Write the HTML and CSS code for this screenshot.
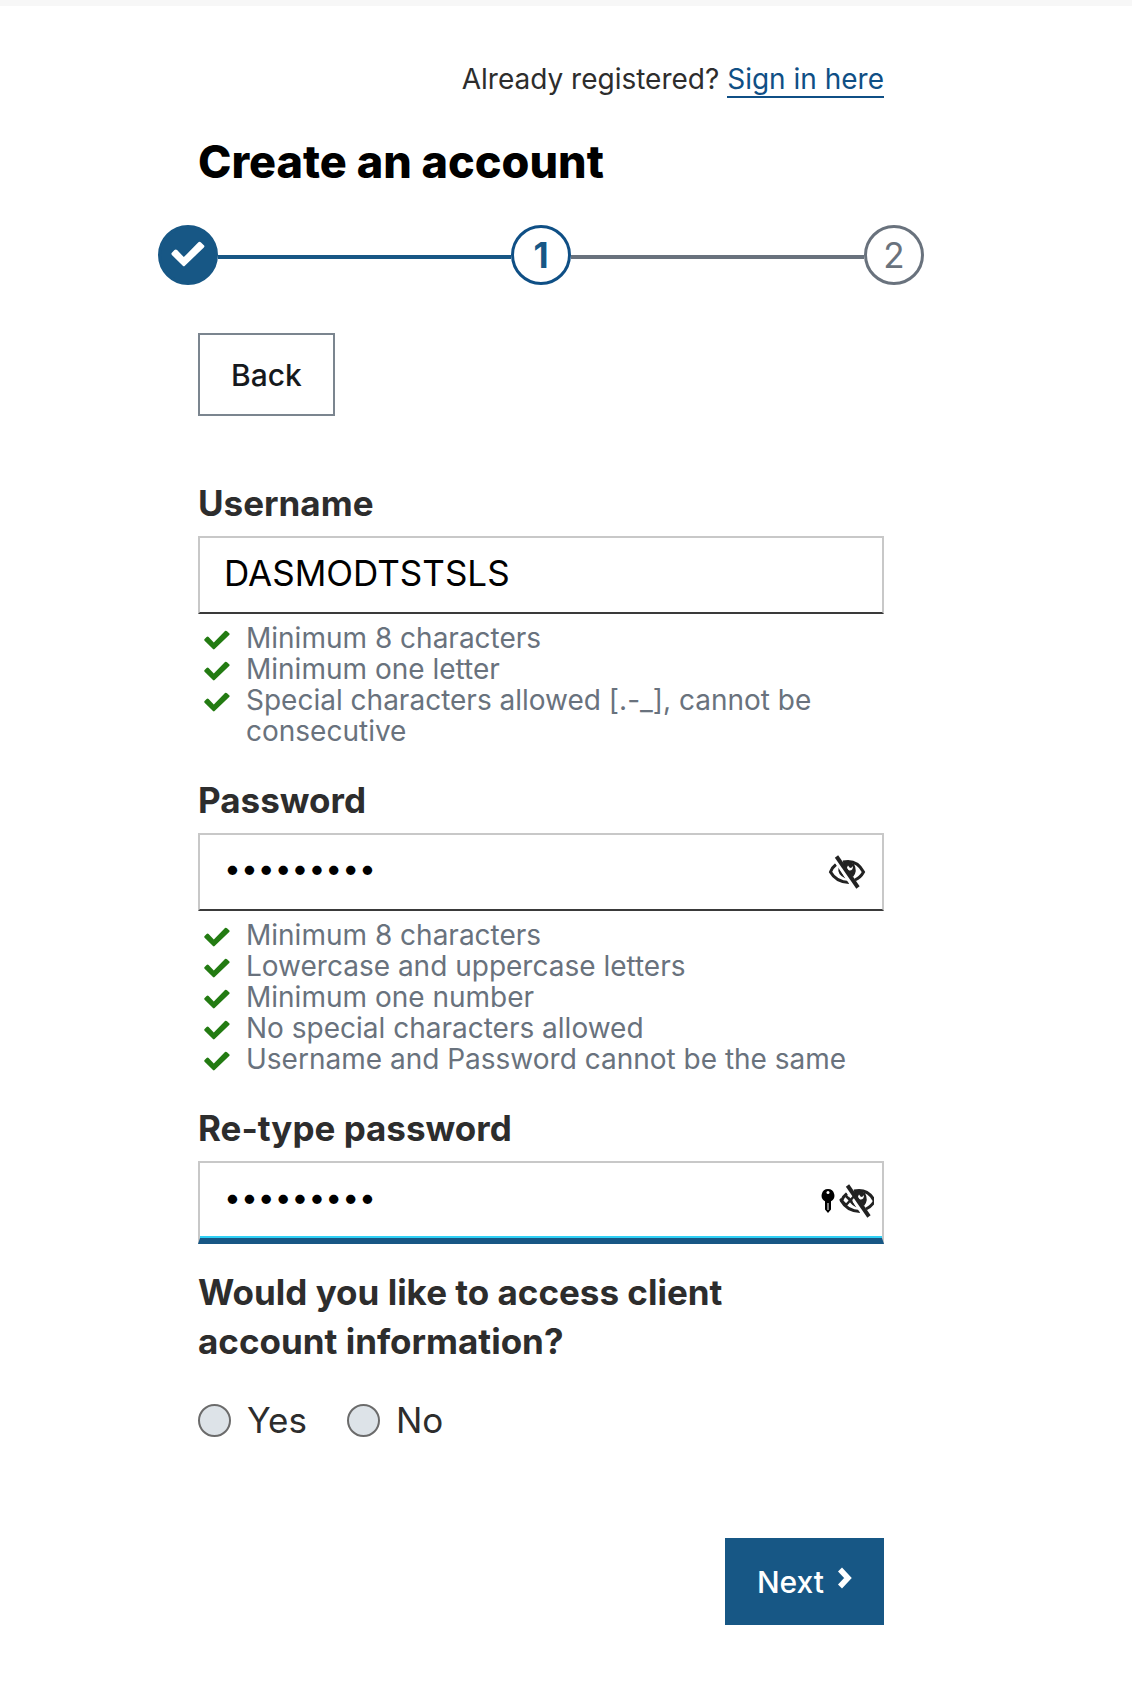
FILE: index.html
```html
<!DOCTYPE html>
<html lang="en">
<head>
    <meta charset="UTF-8">
    <meta name="viewport" content="width=device-width, initial-scale=1.0">
    <title>Create an account</title>
    <link rel="stylesheet" href="styles.css">
</head>
<body>
    <svg class="sprite" aria-hidden="true">
        <symbol id="check" viewBox="0 0 26 20">
            <path d="M0.6 9 L2.6 7 Q3.6 6.2 4.6 7 L9.8 12.4 L21 1 Q22 0.2 23 1.2 L25.4 3.4 Q26 4.2 25.2 5 L10.6 19 Q9.8 19.8 9 19 L0.6 10.8 Q-0.2 9.8 0.6 9 Z" fill="currentColor"/>
        </symbol>
        <symbol id="eye-off" viewBox="0 0 38 34">
            <path d="M8 9.5 Q4 12.5 2.5 17 Q8 27 21 27.5 M15 7 Q29 4 35.5 17 Q32.5 22.5 27 25" fill="none" stroke="currentColor" stroke-width="3"/>
            <path d="M14 9 Q20 5 26 9 Q30 16 25 22 Z M10.5 12 Q9 20 17.5 23.5 Z" fill="currentColor"/>
            <path d="M20 10.5 Q17.5 14 21 15.5 Q25 16 25 11 Q24 13 22 13 Z" fill="#fff"/>
            <path d="M5.5 3 L26.5 34" stroke="#fff" stroke-width="3"/>
            <path d="M8.5 1.5 L30 32.5" stroke="currentColor" stroke-width="4"/>
        </symbol>
    </svg>

    <main class="page">
        <p class="signin">Already registered? <a href="#">Sign in here</a></p>
        <h1>Create an account</h1>

        <ol class="steps">
            <li class="step done" aria-label="Completed"><svg class="step-check"><use href="#check"/></svg></li>
            <li class="bar done" role="presentation"></li>
            <li class="step current" aria-current="step">1</li>
            <li class="bar" role="presentation"></li>
            <li class="step">2</li>
        </ol>

        <form>
            <button type="button" class="btn btn-back">Back</button>

            <div class="field">
                <label for="username">Username</label>
                <div class="control">
                    <input type="text" id="username" value="DASMODTSTSLS">
                </div>
                <ul class="rules">
                    <li><svg><use href="#check"/></svg><span>Minimum 8 characters</span></li>
                    <li><svg><use href="#check"/></svg><span>Minimum one letter</span></li>
                    <li><svg><use href="#check"/></svg><span>Special characters allowed [.-_], cannot be consecutive</span></li>
                </ul>
            </div>

            <div class="field">
                <label for="password">Password</label>
                <div class="control">
                    <input type="password" id="password" value="Passw0rd1">
                    <button type="button" class="toggle" aria-label="Show password"><svg class="eye"><use href="#eye-off"/></svg></button>
                </div>
                <ul class="rules">
                    <li><svg><use href="#check"/></svg><span>Minimum 8 characters</span></li>
                    <li><svg><use href="#check"/></svg><span>Lowercase and uppercase letters</span></li>
                    <li><svg><use href="#check"/></svg><span>Minimum one number</span></li>
                    <li><svg><use href="#check"/></svg><span>No special characters allowed</span></li>
                    <li><svg><use href="#check"/></svg><span>Username and Password cannot be the same</span></li>
                </ul>
            </div>

            <div class="field field-last">
                <label for="retype">Re-type password</label>
                <div class="control active">
                    <input type="password" id="retype" value="Passw0rd1">
                    <button type="button" class="toggle" aria-label="Show password">
                        <svg class="key" viewBox="0 0 14 24">
                            <path d="M7 0 A6.5 6.5 0 0 1 10 12.2 V20.5 L7 24 L4 20.5 V12.2 A6.5 6.5 0 0 1 7 0 Z" fill="#000"/>
                            <circle cx="7" cy="3.5" r="1.5" fill="#fff"/>
                            <path d="M7 14 V21" stroke="#aaa" stroke-width="1.5"/>
                        </svg>
                        <svg class="eye" viewBox="0 0 35 34">
                            <use href="#eye-off" width="38" height="34"/>
                            <path d="M1 15 L7 21 L18 9 M7 12 L13 18" fill="none" stroke="currentColor" stroke-width="2.5"/>
                        </svg>
                    </button>
                </div>
            </div>

            <fieldset>
                <legend>Would you like to access client account information?</legend>
                <div class="choices">
                    <label><input type="radio" name="client" value="yes">Yes</label>
                    <label><input type="radio" name="client" value="no">No</label>
                </div>
            </fieldset>

            <div class="actions">
                <button type="submit" class="btn btn-next">Next
                    <svg viewBox="0 0 14 22"><path d="M2 2.5 L10 11 L2 19.5" fill="none" stroke="currentColor" stroke-width="5.5"/></svg>
                </button>
            </div>
        </form>
    </main>
</body>
</html>
```
FILE: styles.css
```css
* {
    box-sizing: border-box;
}
body {
    margin: 0;
    border-top: 6px solid #f7f7f7;
    background: #fff;
    color: #2d2d2d;
    font-family: Inter, "Open Sans", sans-serif;
    font-size: 28px;
}
.sprite {
    display: none;
}
.page {
    padding: 55px 248px 76px 198px;
}
.signin {
    margin: 0;
    line-height: 36px;
    text-align: right;
}
.signin a {
    color: #0f4f85;
    text-decoration: none;
    border-bottom: 2px solid #0f4f85;
}
h1 {
    margin: 38px 0 37px;
    color: #000;
    font-size: 45px;
    font-weight: 800;
    line-height: 53px;
}

/* progress */
.steps {
    display: flex;
    align-items: center;
    list-style: none;
    margin: 0 -40px 48px;
    padding: 0;
}
.step {
    display: flex;
    align-items: center;
    justify-content: center;
    width: 60px;
    height: 60px;
    border: 3px solid #69727d;
    border-radius: 50%;
    color: #69727d;
    font-size: 35px;
}
.step.current {
    border-color: #0f4f85;
    color: #175785;
    font-weight: 700;
}
.step.done {
    border-color: #175785;
    background: #175785;
    color: #fff;
}
.step-check {
    width: 34px;
    height: 26px;
    margin-bottom: 2px;
}
.bar {
    flex: 1;
    height: 4px;
    margin-top: 4px;
    background: #69727d;
}
.bar.done {
    background: #175785;
}

/* buttons */
.btn {
    display: inline-flex;
    align-items: center;
    justify-content: center;
    font-family: inherit;
    font-size: 30px;
    font-weight: 500;
}
.btn-back {
    height: 83px;
    padding: 0 31px;
    border: 2px solid #7b858f;
    background: #fff;
    color: #16191d;
}
.btn-next {
    gap: 14px;
    height: 87px;
    padding: 0 32px;
    border: 0;
    background: #175785;
    color: #fff;
}
.btn-next svg {
    width: 14px;
    height: 22px;
    margin-bottom: 8px;
}

/* fields */
.field {
    margin-bottom: 33px;
}
.btn-back + .field {
    margin-top: 67px;
}
.field-last {
    margin-bottom: 24px;
}
.field > label,
legend {
    display: block;
    padding: 0;
    font-size: 35px;
    font-weight: 700;
    line-height: 40px;
}
.control {
    display: flex;
    align-items: center;
    height: 78px;
    margin-top: 13px;
    border: 2px solid #c8c8c8;
    border-bottom-color: #3a3a3a;
}
.control.active {
    height: 83px;
    border-bottom: 6px solid #175785;
    box-shadow: inset 0 -2px #2fd0f5;
}
.control input {
    flex: 1;
    min-width: 0;
    height: 68px;
    padding: 0 24px 4px;
    border: 0;
    outline: 0;
    background: none;
    color: #000;
    font-family: inherit;
    font-size: 35px;
}
.control input[type="password"] {
    padding-bottom: 8px;
    font-size: 30px;
}
.toggle {
    display: flex;
    align-items: center;
    margin-right: 16px;
    padding: 0;
    border: 0;
    background: none;
    color: #222;
}
.active .toggle {
    gap: 4px;
    margin-right: 8px;
}
.eye {
    width: 38px;
    height: 34px;
}
.active .eye {
    width: 35px;
}
.key {
    width: 14px;
    height: 24px;
}
.rules {
    list-style: none;
    margin: 9px 0 0;
    padding: 0 0 0 6px;
    color: #69727d;
    line-height: 31px;
}
.rules li {
    display: flex;
    gap: 16px;
}
.rules svg {
    flex: none;
    width: 26px;
    height: 20px;
    margin-top: 7px;
    color: #237b12;
}

/* client question */
fieldset {
    margin: 0;
    padding: 0;
    border: 0;
}
legend {
    max-width: 600px;
    line-height: 49px;
}
.choices {
    display: flex;
    gap: 40px;
    margin-top: 34px;
    font-size: 35px;
    line-height: 40px;
}
.choices label {
    display: flex;
    align-items: center;
    gap: 16px;
}
.choices input {
    appearance: none;
    width: 33px;
    height: 33px;
    margin: 0;
    border: 2px solid #6b6b6b;
    border-radius: 50%;
    background: #dde3e8;
}
.choices input:checked {
    background: #175785;
}
.actions {
    display: flex;
    justify-content: flex-end;
    margin-top: 98px;
}

@media (max-width: 900px) {
    .page {
        padding-left: 60px;
        padding-right: 60px;
    }
}
```
